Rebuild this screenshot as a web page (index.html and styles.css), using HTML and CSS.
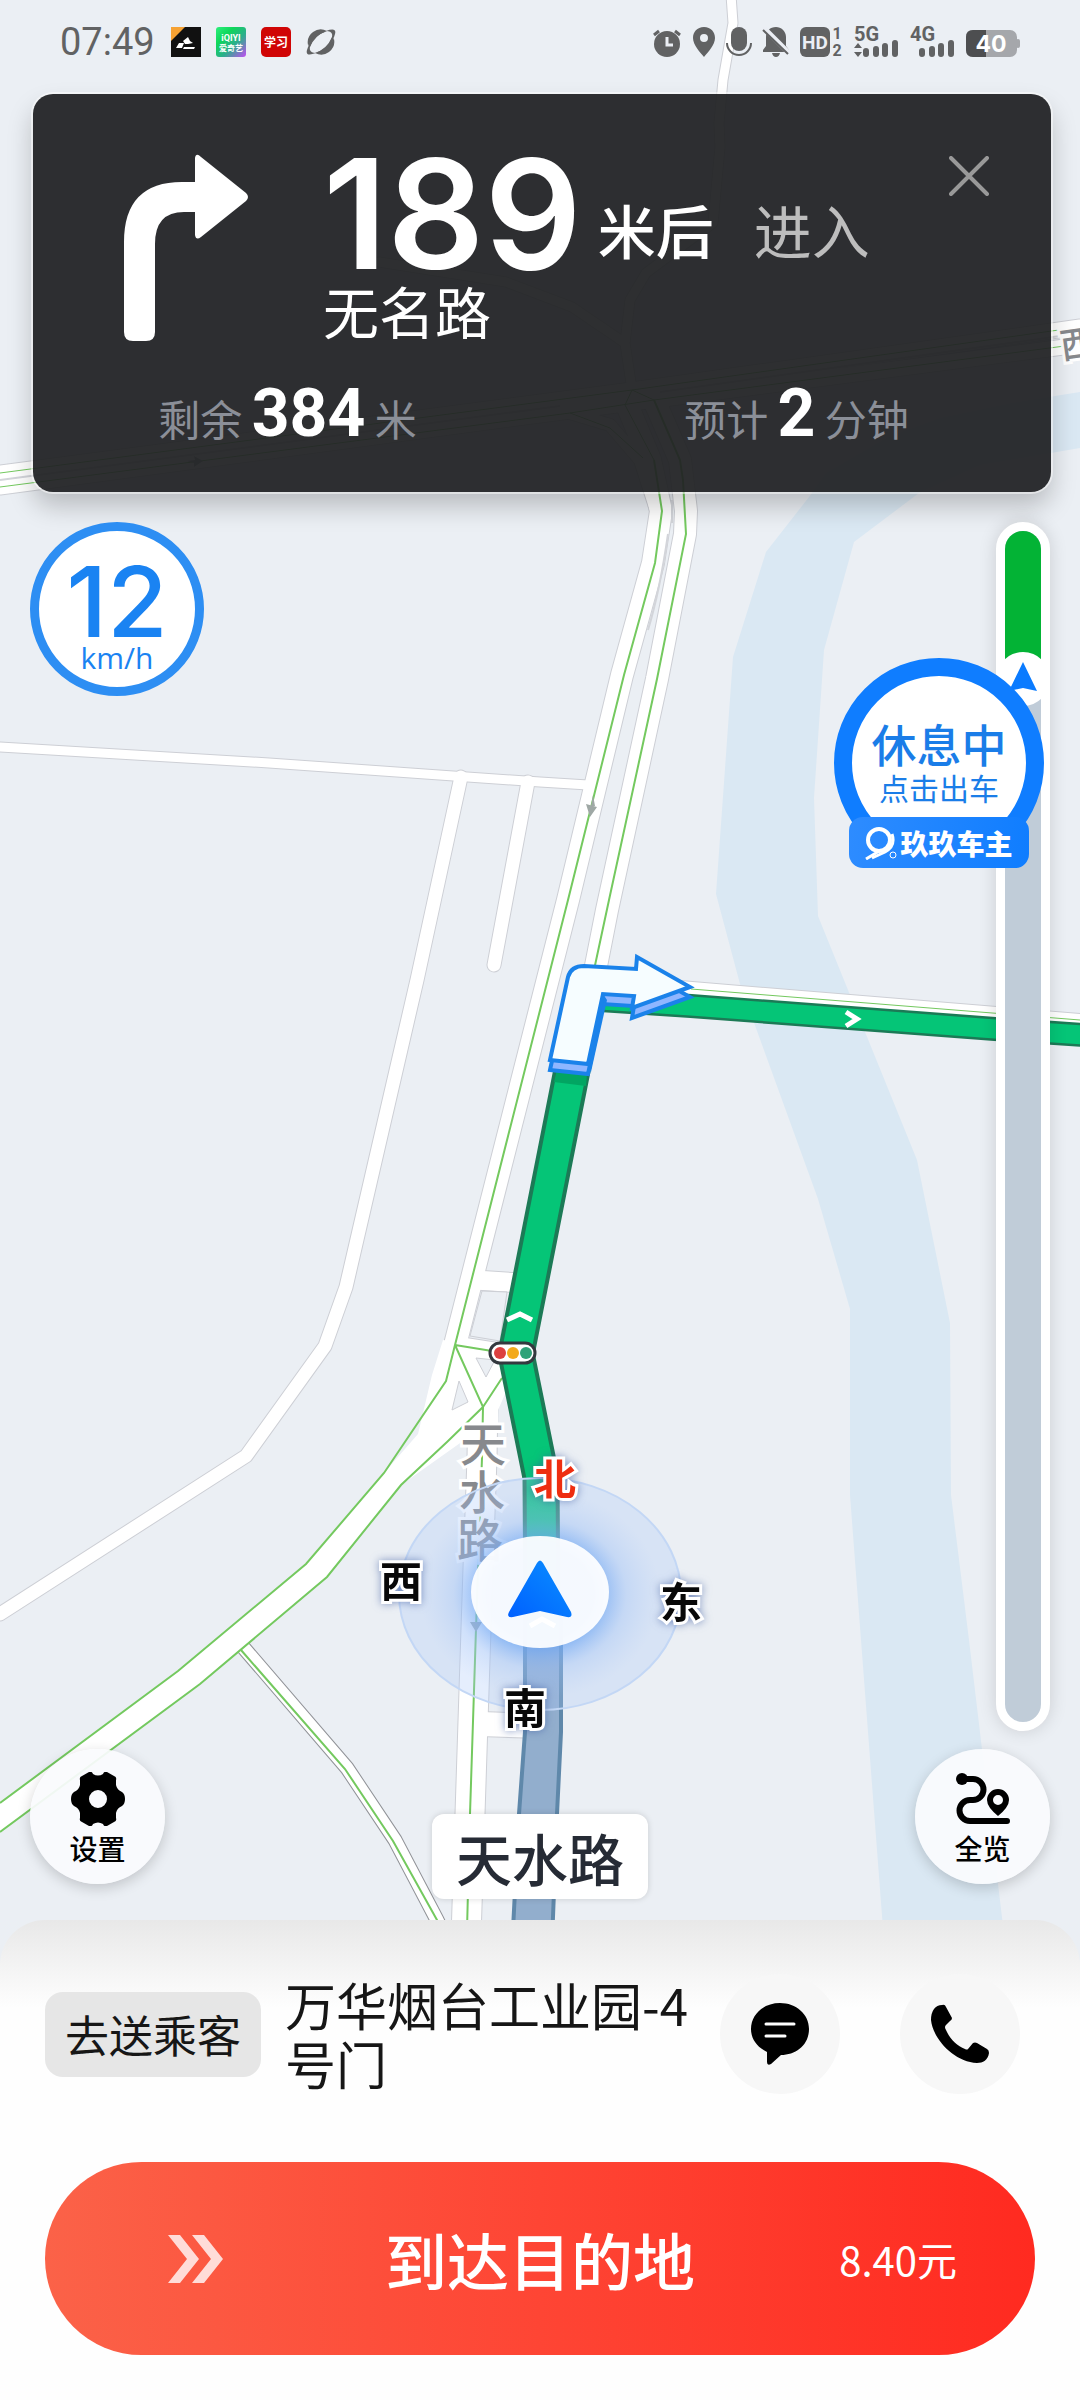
FILE: index.html
```html
<!DOCTYPE html>
<html lang="zh-CN">
<head>
  <meta charset="UTF-8" />
  <meta name="viewport" content="width=device-width, initial-scale=1.0" />
  <title>导航 - 去送乘客</title>
  <link rel="stylesheet" href="styles.css">
</head>
<body>
  <div class="screen">
    <main class="map-area">

      <!-- map canvas -->
      <svg class="map" viewBox="0 0 1080 1968" preserveAspectRatio="xMidYMin slice" aria-hidden="true">
        <defs>
          <path id="lanes" d="M731 -5 L733 23 L723 80 L719 123 L720 147 L713 223 L646 273 L630 300 L625 343 L631 383 M379 262 L506 282 L572 307 L625 343 M0 747 L269 763 L540 782 L588 785" />
          <path id="streets" d="M461 777 L417 980 L346 1287 L325 1346 L246 1456 L0 1614 M528 782 L494 965" />
          <path id="branch" d="M243 1647 L347 1768 L395 1840 L437 1920 L460 1968" />
          <path id="ring" d="M0 473 L632 390 L1080 327 M0 487 L570 411 L1080 345" />
          <path id="ramp" d="M570 413 L610 425 L640 460 L656 510" />
          <path id="north-road" d="M625 400 L650 460 L661 511 L653 563 L622 675 L568 900 L455 1345 L440 1400 M654 400 L680 460 L686 511 L685 534 L657 679 L607 910 L594 976" />
          <path id="south-road" d="M483 1400 L482 1458 L478 1569 L476 1629 L470 1814 L465 1968" />
          <path id="link" d="M475 1280 L520 1283 M455 1346 L500 1353" />
          <path id="link-south" d="M480 1724 L540 1726" />
          <path id="east-road" d="M680 988 L1080 1021" />
          <path id="turn" d="M550 1060 L568 977 Q571 966 584 966 L636 969 L637 957 L690 987 L632 1008 L634 996 L603 994 L588 1064 Z" />
          <linearGradient id="pointer" x1="0" y1="1" x2="1" y2="0">
            <stop offset="0" stop-color="#0060ff" />
            <stop offset="1" stop-color="#0a90ff" />
          </linearGradient>
          <radialGradient id="glow">
            <stop offset="0.45" stop-color="#5f9ef2" stop-opacity="0.8" />
            <stop offset="0.72" stop-color="#8fb8f5" stop-opacity="0.25" />
            <stop offset="1" stop-color="#a8c5f5" stop-opacity="0" />
          </radialGradient>
        </defs>

        <!-- river -->
        <path class="river" d="M1080 392 L1012 403 L940 418 L888 437 L826 473 L809 497 L766 552 L733 657 L716 894 L740 984 L818 1199 L850 1309 L850 1495 L861 1640 L886 1968 L1008 1968 L969 1640 L951 1495 L950 1323 L917 1160 L818 916 L814 798 L824 650 L854 542 L919 493 L980 465 L1080 448 Z" />

        <!-- roads: edge first, white on top -->
        <g class="edge">
          <use href="#lanes" stroke-width="11" />
          <use href="#streets" stroke-width="15" />
          <use href="#branch" stroke-width="15" stroke="#909297" />
          <use href="#ring" stroke-width="17" />
          <use href="#ramp" stroke-width="14" />
          <use href="#north-road" stroke-width="24" />
          <use href="#south-road" stroke-width="31" />
          <use href="#link" stroke-width="21" />
          <use href="#link-south" stroke-width="26" />
          <use href="#east-road" stroke-width="16" />
        </g>
        <g class="fill">
          <use href="#lanes" stroke-width="9" />
          <use href="#streets" stroke-width="13" />
          <use href="#branch" stroke-width="13" />
          <use href="#ring" stroke-width="15" />
          <use href="#ramp" stroke-width="12" />
          <use href="#north-road" stroke-width="22" />
          <use href="#south-road" stroke-width="29" />
          <use href="#link" stroke-width="19" />
          <use href="#link-south" stroke-width="24" />
          <use href="#east-road" stroke-width="14" />
        </g>
        <path class="divider" d="M0 480 L560 406 M660 392 L1060 336 M672 500 L672 523 M668 534 Q660 590 648 630" />
        <path class="junction" d="M443 1340 L505 1350 L506 1392 L498 1410 L498 1430 L470 1436 L401 1485 L327 1577 L200 1684 L0 1832 L0 1803 L178 1671 L306 1564 L384 1473 L418 1434 L432 1375 Z" />
        <path class="island" d="M459 1381 L468 1402 L452 1410 Z M476 1358 L495 1360 L486 1377 Z M482 1291 L507 1292 L500 1341 L470 1336 Z" />

        <!-- traffic lines -->
        <path class="traffic thin" d="M0 473 L632 390 L1080 327 M0 487 L570 413 L654 400 L1080 344 M570 413 L610 428 L643 458 M632 390 L625 405 L654 460 M632 390 L654 400 M691 989 L1080 1020" />
        <path class="traffic" d="M654 460 L662 511 L655 563 L624 675 L568 900 L455 1345 L446 1381 L384 1473 L306 1564 L178 1671 L0 1803" />
        <path class="traffic" d="M654 400 L680 460 L683 480 L686 534 L657 679 L609 900 L594 970" />
        <path class="traffic" d="M0 1832 L200 1684 L327 1577 L401 1485 L447 1442 L483 1407 L482 1458 L478 1569 L476 1629 L470 1814 L466 1968" />
        <path class="traffic" d="M455 1345 L492 1351 M455 1345 L483 1407 L502 1378 M241 1650 L345 1769 L393 1841 L437 1920 L460 1968" />
        <path class="way" d="M586 804 L597 807 L590 817 Z M593 795 L595 806 L591 806 Z M470 1622 L482 1622 L476 1632 Z M187 461 L195 460 L194 456 L203 461 L194 467 L194 463 Z" />

        <!-- driven part of the route -->
        <path class="driven" d="M525 1610 L525 1732 L519 1814 L511 1968 L551 1968 L557 1814 L561 1732 L561 1610 Z" />

        <!-- route ahead -->
        <path class="route-edge" d="M600 1000 L691 1006 L995 1029 L1085 1035" stroke-width="24" />
        <path class="route" d="M600 1000 L691 1006 L995 1029 L1085 1035" stroke-width="19" />
        <path class="route-edge" d="M574 1060 L516 1354 L541 1477 L542 1620" stroke-width="37" />
        <path class="route" d="M574 1060 L516 1354 L541 1477 L542 1620" stroke-width="29" />
        <path class="route-shade" d="M557 1070 L587 1074 L586 1086 L554 1082 Z" />
        <path class="tick" d="M507 1320 L520 1314 L532 1320 M846 1012 L857 1019 L846 1026" />

        <use class="turn-side" href="#turn" y="10" />
        <path class="turn-wall" d="M588 1064 L603 994 L607 1000 L591 1072 Z" />
        <use class="turn-face" href="#turn" />

        <!-- traffic light -->
        <rect class="light" x="490" y="1343" width="45" height="20" rx="10" />
        <circle cx="500" cy="1353" r="6" fill="#dc4040" />
        <circle cx="513" cy="1353" r="6" fill="#f3aa1c" />
        <circle cx="526" cy="1353" r="6" fill="#2fa278" />

        <!-- road labels -->
        <g class="road-label">
          <text x="483" y="1461">天</text>
          <text x="482" y="1509">水</text>
          <text x="480" y="1557">路</text>
          <text class="road-label-small" x="1078" y="357" transform="rotate(-8 1078 343)">西</text>
        </g>

        <!-- compass -->
        <ellipse class="compass" cx="540" cy="1594" rx="141" ry="116" />
        <ellipse cx="540" cy="1594" rx="120" ry="104" fill="url(#glow)" />
        <ellipse class="compass-disc" cx="540" cy="1592" rx="69" ry="56" />
        <path class="disc-tick" d="M530 1626 L542 1619 L555 1626" />
        <path d="M537 1563 Q540 1558 543 1563 L571 1612 Q573 1618 567 1617 L540 1611 L513 1617 Q506 1618 509 1612 Z" fill="url(#pointer)" />
        <g class="compass-text">
          <text class="north" x="555" y="1495">北</text>
          <text x="401" y="1597">西</text>
          <text x="681" y="1618">东</text>
          <text x="525" y="1724">南</text>
        </g>
      </svg>

      <header class="status-bar">
        <span class="clock">07:49</span>
        <div class="apps">
          <svg width="30" height="30" viewBox="0 0 30 30">
            <rect width="30" height="30" fill="#111" />
            <path d="M0 0 H14 L0 14 Z" fill="#f6a233" />
            <path d="M5 21 L8 16 H13 L11 21 Z M13 20 H24 L23 22 H12 Z M12 14 L17 10 L19 14 L22 16 L17 17 L14 17 Z" fill="#fff" />
          </svg>
          <svg width="30" height="30" viewBox="0 0 30 30">
            <defs>
              <linearGradient id="qiyi" x1="0" y1="0" x2="1" y2="1">
                <stop offset="0" stop-color="#2df07c" />
                <stop offset="0.3" stop-color="#0fd65a" />
                <stop offset="0.6" stop-color="#2cae8c" />
                <stop offset="1" stop-color="#c44cf5" />
              </linearGradient>
            </defs>
            <rect width="30" height="30" rx="3" fill="url(#qiyi)" />
            <text class="app-text" x="15" y="14" font-size="9">iQIYI</text>
            <text class="app-text" x="15" y="24" font-size="8">爱奇艺</text>
          </svg>
          <svg width="30" height="30" viewBox="0 0 30 30">
            <rect width="30" height="30" rx="5" fill="#d00505" />
            <text class="app-text" x="15" y="20" font-size="12">学习</text>
          </svg>
          <svg width="30" height="30" viewBox="0 0 30 30" fill="#616263">
            <path d="M2 18 A13 13 0 0 1 21 4 Q9 8 2 18 Z" />
            <path d="M28 12 A13 13 0 0 1 9 26 Q21 22 28 12 Z" />
            <path d="M20 4 Q31 0 29 7 Q28 12 22 18 Q27 11 26 7 Q25 4 20 4 Z M10 26 Q-1 30 1 23 Q2 18 8 12 Q3 19 4 23 Q5 26 10 26 Z" />
            <path d="M2 18 Q8 5 21 4 Q9 8 4 20 Z M28 12 Q22 25 9 26 Q21 22 26 10 Z" />
          </svg>
        </div>
        <div class="system">
          <svg width="30" height="30" viewBox="0 0 30 30">
            <circle cx="15" cy="17" r="13" />
            <path d="M2 8 L7 4 M28 8 L23 4" stroke="#616263" stroke-width="3" />
            <path d="M15 10 V18 H21" fill="none" stroke="#ebeef4" stroke-width="3" />
          </svg>
          <svg width="24" height="30" viewBox="0 0 24 30">
            <path fill-rule="evenodd" d="M12 0 C5 0 1 5 1 11 C1 18 8 25 12 30 C16 25 23 18 23 11 C23 5 19 0 12 0 Z M12 7 A4 4 0 1 1 12 15 A4 4 0 1 1 12 7 Z" />
          </svg>
          <svg width="26" height="30" viewBox="0 0 26 30">
            <rect x="5" y="0" width="16" height="24" rx="8" />
            <path d="M1 16 A12 12 0 0 0 25 16" fill="none" stroke="#616263" stroke-width="2" />
          </svg>
          <svg width="28" height="30" viewBox="0 0 28 30">
            <path d="M14 0 C19 0 24 4 24 10 V19 L27 23 V25 H1 V23 L4 19 V10 C4 4 8 0 14 0 Z M10 26 H18 Q17 30 14 30 Q11 30 10 26 Z" />
            <path d="M0 -1 L27 26" stroke="#ebeef4" stroke-width="5" />
            <path d="M1 3 L26 27" stroke="#616263" stroke-width="2" />
          </svg>
          <svg class="spill" width="44" height="30" viewBox="0 0 44 30">
            <rect width="30" height="30" rx="6" />
            <text class="hd-text" x="15" y="22">HD</text>
            <text class="sim-text" x="37" y="12">1</text>
            <text class="sim-text" x="37" y="29">2</text>
          </svg>
          <svg class="spill" width="46" height="30" viewBox="0 0 46 30">
            <text class="net-text" x="0" y="14">5G</text>
            <path d="M0 21 L4 16 L8 21 Z M0 25 H8 L4 30 Z" />
            <path class="bars" d="M12 24 V27 M22 22 V27 M31 19 V27 M41 16 V27" />
          </svg>
          <svg class="spill" width="46" height="30" viewBox="0 0 46 30">
            <text class="net-text" x="0" y="14">4G</text>
            <path class="bars" d="M12 24 V27 M22 22 V27 M31 19 V27 M41 16 V27" />
          </svg>
          <svg width="54" height="30" viewBox="0 0 54 30">
            <rect x="0" y="3" width="51" height="27" rx="7" fill="#a5a7ab" />
            <rect x="50" y="12" width="4" height="9" rx="2" fill="#a5a7ab" />
            <path d="M7 3 H20 V30 H7 Q0 30 0 23 V10 Q0 3 7 3 Z" fill="#4d4e50" />
            <text class="battery-text" x="25" y="25">40</text>
          </svg>
        </div>
      </header>

      <section class="guide">
        <div class="guide-top">
          <svg width="124" height="188" viewBox="0 0 124 188" fill="#fff">
            <path d="M0 178 V88 Q0 28 58 28 H71 V4 Q72 -2 77 3 L122 39 Q126 43 122 47 L77 83 Q72 87 71 81 V58 H60 Q31 58 31 90 V178 Q31 187 22 187 H9 Q0 187 0 178 Z" />
          </svg>
          <div class="guide-text">
            <p class="guide-distance">
              <strong>189</strong>
              <span class="unit">米后</span>
              <span class="enter">进入</span>
            </p>
            <p class="guide-road">无名路</p>
          </div>
          <button class="close" type="button" aria-label="关闭">
            <svg width="40" height="40" viewBox="0 0 40 40">
              <path d="M2 2 L38 38 M38 2 L2 38" stroke="#999" stroke-width="4" stroke-linecap="round" />
            </svg>
          </button>
        </div>
        <div class="guide-stats">
          <p>剩余 <strong>384</strong> 米</p>
          <p>预计 <strong>2</strong> 分钟</p>
        </div>
      </section>

      <div class="controls">
        <div class="side">
          <div class="speed">
            <strong>12</strong>
            <span>km/h</span>
          </div>
          <button class="round" type="button">
            <svg width="54" height="54" viewBox="0 0 54 54">
              <path fill-rule="evenodd" d="M18 0 Q21 -1 22 2 Q27 5 32 2 Q33 -1 36 0 L43 4 Q46 5 45 8 V13 Q46 18 51 20 Q54 22 54 27 Q54 32 51 34 Q46 36 45 41 V46 Q46 49 43 50 L36 54 Q33 55 32 52 Q27 49 22 52 Q21 55 18 54 L11 50 Q8 49 9 46 V41 Q8 36 3 34 Q0 32 0 27 Q0 22 3 20 Q8 18 9 13 V8 Q8 5 11 4 Z M27 18 A9 9 0 1 0 27 36 A9 9 0 1 0 27 18 Z" />
            </svg>
            <span>设置</span>
          </button>
        </div>

        <p class="current-road">天水路</p>

        <div class="side side-right">
          <div class="progress">
            <div class="progress-done"></div>
            <svg class="progress-car" width="54" height="54" viewBox="0 0 54 54">
              <circle cx="27" cy="27" r="27" fill="#fff" />
              <path d="M27 10 L41 39 L27 36 L13 39 Z" fill="#0a7bff" />
            </svg>
          </div>
          <button class="rest" type="button">
            <span class="rest-title">休息中</span>
            <span class="rest-hint">点击出车</span>
            <span class="rest-brand">
              <svg width="32" height="34" viewBox="0 0 32 34" fill="none" stroke="#fff">
                <circle cx="14" cy="14" r="11" stroke-width="4" />
                <path d="M27 8 Q31 20 20 26 L7 32" stroke-width="3" />
                <path d="M1 33 L16 24" stroke-width="3" />
                <circle cx="28" cy="29" r="3" stroke-width="1" />
              </svg>
              <span>玖玖车主</span>
            </span>
          </button>
          <button class="round" type="button">
            <svg width="56" height="54" viewBox="0 0 56 54">
              <circle cx="7" cy="7" r="6" />
              <path d="M7 7 H18 A10 10 0 0 1 18 28 H15 A10 10 0 0 0 15 49 H52" fill="none" stroke="#000" stroke-width="6" stroke-linecap="round" />
              <path fill-rule="evenodd" d="M43 17 A11 11 0 0 1 54 28 Q54 35 43 44 Q32 35 32 28 A11 11 0 0 1 43 17 Z M43 23 A5 5 0 1 0 43 33 A5 5 0 1 0 43 23 Z" />
            </svg>
            <span>全览</span>
          </button>
        </div>
      </div>
    </main>

    <section class="sheet">
      <div class="trip">
        <span class="tag">去送乘客</span>
        <p class="address">万华烟台工业园-4号门</p>
        <button class="contact" type="button" aria-label="消息">
          <svg width="58" height="62" viewBox="0 0 58 62">
            <path d="M29 0 C45 0 58 11 58 26 C58 42 45 52 30 52 L20 61 Q16 63 16 59 V49 C6 44 0 36 0 26 C0 11 13 0 29 0 Z" />
            <path d="M15 21 H43 M15 33 H34" stroke="#fff" stroke-width="3" stroke-linecap="round" />
          </svg>
        </button>
        <button class="contact" type="button" aria-label="电话">
          <svg width="58" height="60" viewBox="0 0 58 60">
            <path d="M3 5 Q6 1 11 1 Q14 0 15 3 L21 14 Q21 16 19 17 L15 21 Q13 23 15 26 C19 35 26 42 34 45 Q36 46 37 45 L42 39 Q44 38 46 39 L56 45 Q58 46 58 49 C57 56 52 59 46 59 C23 58 2 35 0 16 Q0 9 3 5 Z" />
          </svg>
        </button>
      </div>
      <button class="arrive" type="button">
        <svg class="arrive-icon" width="56" height="48" viewBox="0 0 56 48" fill="#ffdcd8">
          <path d="M0 0 H12 L31 24 L12 48 H0 L19 24 Z M24 0 H36 L55 24 L36 48 H24 L43 24 Z" />
        </svg>
        <span class="arrive-text">到达目的地</span>
        <span class="price">8.40元</span>
      </button>
    </section>
  </div>
</body>
</html>
```
FILE: styles.css
```css
* {
  box-sizing: border-box;
}

body {
  margin: 0;
  font-family: "Noto Sans CJK SC", Roboto, sans-serif;
  background: #fefefe;
  color: #161616;
}

p {
  margin: 0;
}

button {
  border: none;
  padding: 0;
  font-family: inherit;
  color: inherit;
  cursor: pointer;
}

svg {
  display: block;
  flex: none;
}

.screen {
  display: flex;
  flex-direction: column;
  min-height: 100vh;
}

/* map */
.map-area {
  position: relative;
  flex: 1;
  display: flex;
  flex-direction: column;
  background: #ebeff4;
}

.map {
  position: absolute;
  top: 0;
  left: 0;
  width: 100%;
  height: calc(100% + 48px);
  background: #ebeff4;
}

.river {
  fill: #dae8f3;
}

.edge,
.fill {
  fill: none;
  stroke-linecap: round;
  stroke-linejoin: round;
}

.edge {
  stroke: #cdcfd5;
}

.fill {
  stroke: #fff;
}

.divider {
  fill: none;
  stroke: #d3d5da;
  stroke-width: 2px;
}

.junction {
  fill: #fff;
}

.island {
  fill: #ebeff4;
  stroke: #cdcfd5;
  stroke-width: 1px;
}

.traffic {
  fill: none;
  stroke: #74c95f;
  stroke-width: 2px;
}

.thin {
  stroke-width: 1px;
}

.way {
  fill: #9fa8a5;
}

.driven {
  fill: #92aecd;
  stroke: #5f88aa;
  stroke-width: 4px;
}

.route-edge,
.route {
  fill: none;
  stroke: #1c7a56;
  stroke-linejoin: round;
}

.route {
  stroke: #05c577;
}

.route-shade {
  fill: #02a562;
}

.tick,
.disc-tick {
  fill: none;
  stroke: #fff;
  stroke-width: 5px;
}

.turn-side {
  fill: #8fb6ff;
  stroke: #1a82ea;
  stroke-width: 4px;
}

.turn-wall {
  fill: #1a82ea;
}

.turn-face {
  fill: #f6fdff;
  stroke: #1a82ea;
  stroke-width: 4px;
}

.light {
  fill: #fff;
  stroke: #34393f;
  stroke-width: 3px;
}

.road-label {
  fill: #87898d;
  stroke: #fff;
  stroke-width: 6px;
  paint-order: stroke;
  font-size: 46px;
  font-weight: 500;
  text-anchor: middle;
}

.road-label-small {
  font-size: 36px;
}

.compass {
  fill: rgba(170, 198, 248, 0.3);
  stroke: #c3d7f5;
  stroke-width: 2px;
}

.compass-disc {
  fill: rgba(255, 255, 255, 0.93);
}

.compass-text {
  fill: #080808;
  stroke: #fff;
  stroke-width: 6px;
  paint-order: stroke;
  font-size: 42px;
  font-weight: 700;
  text-anchor: middle;
  filter: drop-shadow(0 0 4px rgba(60, 90, 160, 0.6));
}

.north {
  fill: #ee2d10;
}

/* status bar */
.status-bar {
  position: relative;
  display: flex;
  align-items: center;
  height: 94px;
  padding: 0 60px 10px;
  color: #616263;
  font-family: Roboto, "Noto Sans CJK SC", sans-serif;
}

.clock {
  font-size: 38px;
}

.apps {
  display: flex;
  gap: 15px;
  margin-left: 16px;
}

.app-text {
  fill: #fff;
  font-weight: 700;
  text-anchor: middle;
}

.system {
  display: flex;
  gap: 10px;
  margin-left: auto;
  fill: #616263;
}

.spill {
  overflow: visible;
}

.hd-text {
  fill: #ebeef4;
  font-size: 19px;
  font-weight: 700;
  text-anchor: middle;
}

.sim-text {
  font-size: 16px;
  font-weight: 700;
  text-anchor: middle;
}

.net-text {
  font-size: 20px;
  font-weight: 700;
}

.bars {
  fill: none;
  stroke: #616263;
  stroke-width: 6px;
  stroke-linecap: round;
}

.battery-text {
  fill: #fff;
  font-family: Inter, sans-serif;
  font-size: 23px;
  font-weight: 700;
  text-anchor: middle;
}

/* guide card */
.guide {
  position: relative;
  margin: 0 29px 0 33px;
  padding: 60px 62px 33px 91px;
  border-radius: 20px;
  background: rgba(33, 34, 36, 0.94);
  box-shadow: 0 0 0 2px rgba(255, 255, 255, 0.5), 0 14px 26px rgba(0, 0, 0, 0.22);
  color: #fff;
}

.guide-top {
  display: flex;
  align-items: flex-start;
  height: 192px;
}

.guide-text {
  flex: 1;
  margin-left: 75px;
}

.guide-distance {
  display: flex;
  align-items: flex-end;
}

.guide-distance strong {
  font-family: Inter, sans-serif;
  font-size: 152px;
  font-weight: 600;
  line-height: 120px;
}

.unit,
.enter {
  font-size: 58px;
  line-height: 90px;
}

.unit {
  margin-left: 16px;
  font-weight: 500;
}

.enter {
  margin-left: 40px;
  color: #bdbdbd;
}

.guide-road {
  font-size: 56px;
  line-height: 72px;
}

.close {
  background: none;
  margin-top: 2px;
}

.guide-stats {
  display: flex;
  margin: 31px -62px 0 -91px;
  color: #8b8f98;
  font-size: 42px;
  line-height: 82px;
}

.guide-stats p {
  flex: 1;
  text-align: center;
}

.guide-stats strong {
  color: #fff;
  font-family: Roboto, sans-serif;
  font-size: 66px;
  line-height: 66px;
}

/* floating controls */
.controls {
  position: relative;
  flex: 1;
  display: flex;
  justify-content: space-between;
  padding: 30px 30px 0;
}

.side {
  display: flex;
  flex-direction: column;
  align-items: flex-start;
  justify-content: space-between;
  width: 174px;
  padding-bottom: 36px;
}

.side-right {
  position: relative;
  align-items: flex-end;
  gap: 18px;
}

.speed {
  width: 174px;
  height: 174px;
  border: 9px solid #2d8ef3;
  border-radius: 50%;
  background: #fff;
  color: #1a83f2;
  text-align: center;
}

.speed strong {
  display: block;
  margin-top: 30px;
  font-family: Inter, sans-serif;
  font-size: 98px;
  font-weight: 500;
  line-height: 82px;
}

.speed span {
  display: block;
  font-family: "Open Sans", sans-serif;
  font-size: 30px;
  line-height: 30px;
}

.round {
  display: flex;
  flex-direction: column;
  align-items: center;
  gap: 4px;
  width: 135px;
  height: 135px;
  padding-top: 23px;
  border-radius: 50%;
  background: rgba(250, 251, 253, 0.93);
  box-shadow: 0 4px 14px rgba(0, 0, 0, 0.18);
  color: #000;
  font-size: 28px;
  font-weight: 500;
  line-height: 36px;
}

.current-road {
  align-self: flex-end;
  margin-bottom: 21px;
  padding: 0 24px;
  border-radius: 12px;
  background: #fff;
  box-shadow: 0 0 6px rgba(0, 0, 0, 0.15);
  color: #262b35;
  font-size: 56px;
  font-weight: 500;
  line-height: 85px;
}

.progress {
  flex: 1;
  width: 54px;
  border: 9px solid #fff;
  border-radius: 27px;
  background: #c0ccd8;
  box-shadow: 0 0 18px rgba(0, 0, 0, 0.14);
}

.progress-done {
  height: 130px;
  border-radius: 18px 18px 0 0;
  background: #03b335;
}

.progress-car {
  margin: -9px 0 0 -9px;
}

.rest {
  position: absolute;
  top: 136px;
  right: 6px;
  display: flex;
  flex-direction: column;
  align-items: center;
  width: 210px;
  height: 210px;
  padding-top: 42px;
  border: 18px solid #0f7dff;
  border-radius: 50%;
  background: #fff;
  color: #1a7de8;
  font-weight: 500;
}

.rest-title {
  font-size: 45px;
  line-height: 52px;
}

.rest-hint {
  font-size: 30px;
  font-weight: 400;
  line-height: 34px;
}

.rest-brand {
  position: absolute;
  bottom: -18px;
  display: flex;
  align-items: center;
  justify-content: center;
  gap: 3px;
  width: 180px;
  height: 51px;
  border-radius: 14px;
  background: linear-gradient(100deg, #2e8cff, #0f7dff);
  color: #fff;
  font-size: 28px;
  font-weight: 900;
  line-height: 48px;
  white-space: nowrap;
}

/* bottom sheet */
.sheet {
  position: relative;
  padding: 54px 45px 45px;
  border-radius: 45px 45px 0 0;
  background: linear-gradient(#e8e8e8, #fefefe 88px);
}

.trip {
  display: flex;
  align-items: center;
  padding-right: 15px;
}

.tag {
  padding: 0 20px;
  border-radius: 18px;
  background: #e6e6e6;
  font-size: 44px;
  line-height: 85px;
  white-space: nowrap;
}

.address {
  flex: 1;
  margin-left: 24px;
  font-size: 51px;
  line-height: 59px;
}

.contact {
  display: flex;
  align-items: center;
  justify-content: center;
  flex: none;
  width: 120px;
  height: 120px;
  border-radius: 50%;
  background: #f7f7f7;
}

.contact + .contact {
  margin-left: 60px;
}

.arrive {
  display: grid;
  grid-template-columns: 1fr auto 1fr;
  align-items: center;
  width: 100%;
  height: 193px;
  margin-top: 68px;
  padding: 0 78px;
  border-radius: 97px;
  background: linear-gradient(to right, #fb6248, #fe4534 50%, #ff2a20);
  color: #fff;
}

.arrive-icon {
  margin-left: 45px;
}

.arrive-text {
  font-size: 62px;
  font-weight: 500;
}

.price {
  justify-self: end;
  font-size: 40px;
}
```
